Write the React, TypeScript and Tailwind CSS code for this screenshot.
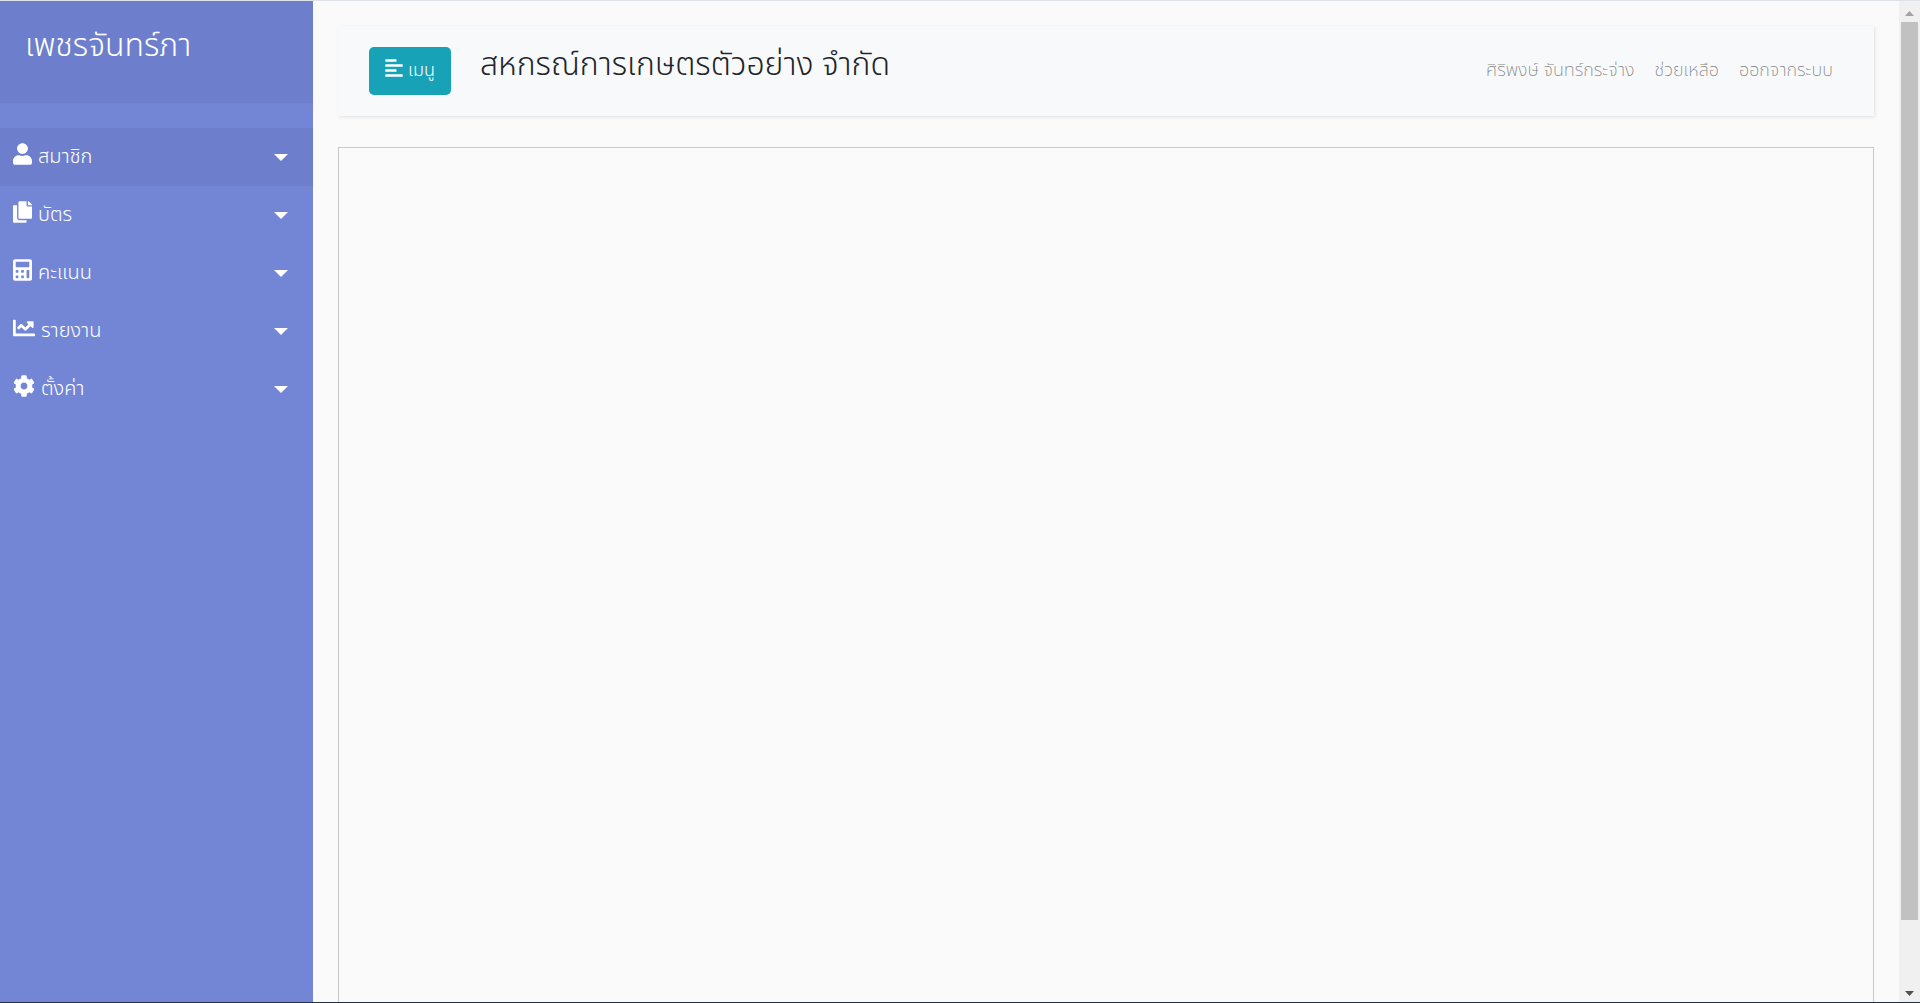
import type { IconType } from "react-icons";
import { FaAlignLeft, FaCalculator, FaChartLine, FaCog, FaCopy, FaUser } from "react-icons/fa";

type MenuItem = { label: string; icon: IconType; iconWidth: string; active?: boolean };

const menuItems: MenuItem[] = [
  { label: "สมาชิก", icon: FaUser, iconWidth: "w-[19px]", active: true },
  { label: "บัตร", icon: FaCopy, iconWidth: "w-[19px]" },
  { label: "คะแนน", icon: FaCalculator, iconWidth: "w-[19px]" },
  { label: "รายงาน", icon: FaChartLine, iconWidth: "w-[22px]" },
  { label: "ตั้งค่า", icon: FaCog, iconWidth: "w-[22px]" },
];

const userLinks = ["ศิริพงษ์ จันทร์กระจ่าง", "ช่วยเหลือ", "ออกจากระบบ"];

function Sidebar() {
  return (
    <aside className="w-[313px] shrink-0 bg-[#7386d5] text-white">
      <div className="h-[102px] bg-[#6d7fcc] px-[25px] pt-[25px]">
        <h3 className="text-[32px] leading-10 font-light">เพชรจันทร์ภา</h3>
      </div>
      <ul className="py-[25px]">
        {menuItems.map(({ label, icon: Icon, iconWidth, active }) => (
          <li key={label}>
            <button
              type="button"
              className={`flex h-[58px] w-full items-center gap-[6px] pr-[25px] pl-[13px] text-left ${active ? "bg-[#6d7fcc]" : ""}`}
            >
              <Icon className={`mb-[6px] h-[22px] ${iconWidth}`} />
              <span className="flex-1 text-[20px] leading-6 font-light">{label}</span>
              <svg className="h-[7px] w-[14px]" viewBox="0 0 14 7" fill="currentColor">
                <path d="M0 0h14L7 7z" />
              </svg>
            </button>
          </li>
        ))}
      </ul>
    </aside>
  );
}

function Navbar() {
  return (
    <nav className="flex h-[90px] items-center bg-[#f8f9fa] pr-[41px] pl-[31px] shadow-[1px_1px_3px_rgba(0,0,0,0.1)]">
      <button type="button" className="flex h-12 items-center gap-[5px] rounded-[5px] bg-[#17a2b8] px-4 text-white">
        <FaAlignLeft className="mb-[6px] h-5 w-[18px]" />
        <span className="text-[18px] leading-6 font-light">เมนู</span>
      </button>
      <h3 className="mb-3 ml-[29px] flex-1 text-[32px] leading-10 font-light text-[#212529]">
        สหกรณ์การเกษตรตัวอย่าง จำกัด
      </h3>
      <ul className="flex gap-5">
        {userLinks.map((link) => (
          <li key={link}>
            <a href="#" className="text-[18px] leading-6 font-extralight text-[#808080]">{link}</a>
          </li>
        ))}
      </ul>
    </nav>
  );
}

function Scrollbar() {
  return (
    <div className="flex w-[21px] shrink-0 flex-col items-center bg-[#f0f0f0]">
      <div className="flex h-[21px] items-center pt-1">
        <svg className="h-[5px] w-[9px]" viewBox="0 0 9 5" fill="#a3a3a3">
          <path d="M0 5h9L4.500 0z" />
        </svg>
      </div>
      <div className="flex w-full flex-1 flex-col px-[2px]">
        <div className="grow-[898] bg-[#c1c1c1]" />
        <div className="grow-[61]" />
      </div>
      <div className="flex h-[21px] items-center pt-1">
        <svg className="h-[5px] w-[9px]" viewBox="0 0 9 5" fill="#505050">
          <path d="M0 0h9L4.500 5z" />
        </svg>
      </div>
    </div>
  );
}

export default function App() {
  return (
    <div className="flex h-screen overflow-hidden border-t border-t-[#dee2e6] border-b border-b-[#223044] bg-[#fafafa] font-['Noto_Sans_Thai','Noto_Sans',sans-serif]">
      <Sidebar />
      <main className="flex min-w-0 flex-1 flex-col px-[25px] pt-[25px]">
        <Navbar />
        <section className="mt-[31px] flex-1 border border-b-0 border-[#c8c8c8]" />
      </main>
      <Scrollbar />
    </div>
  );
}
